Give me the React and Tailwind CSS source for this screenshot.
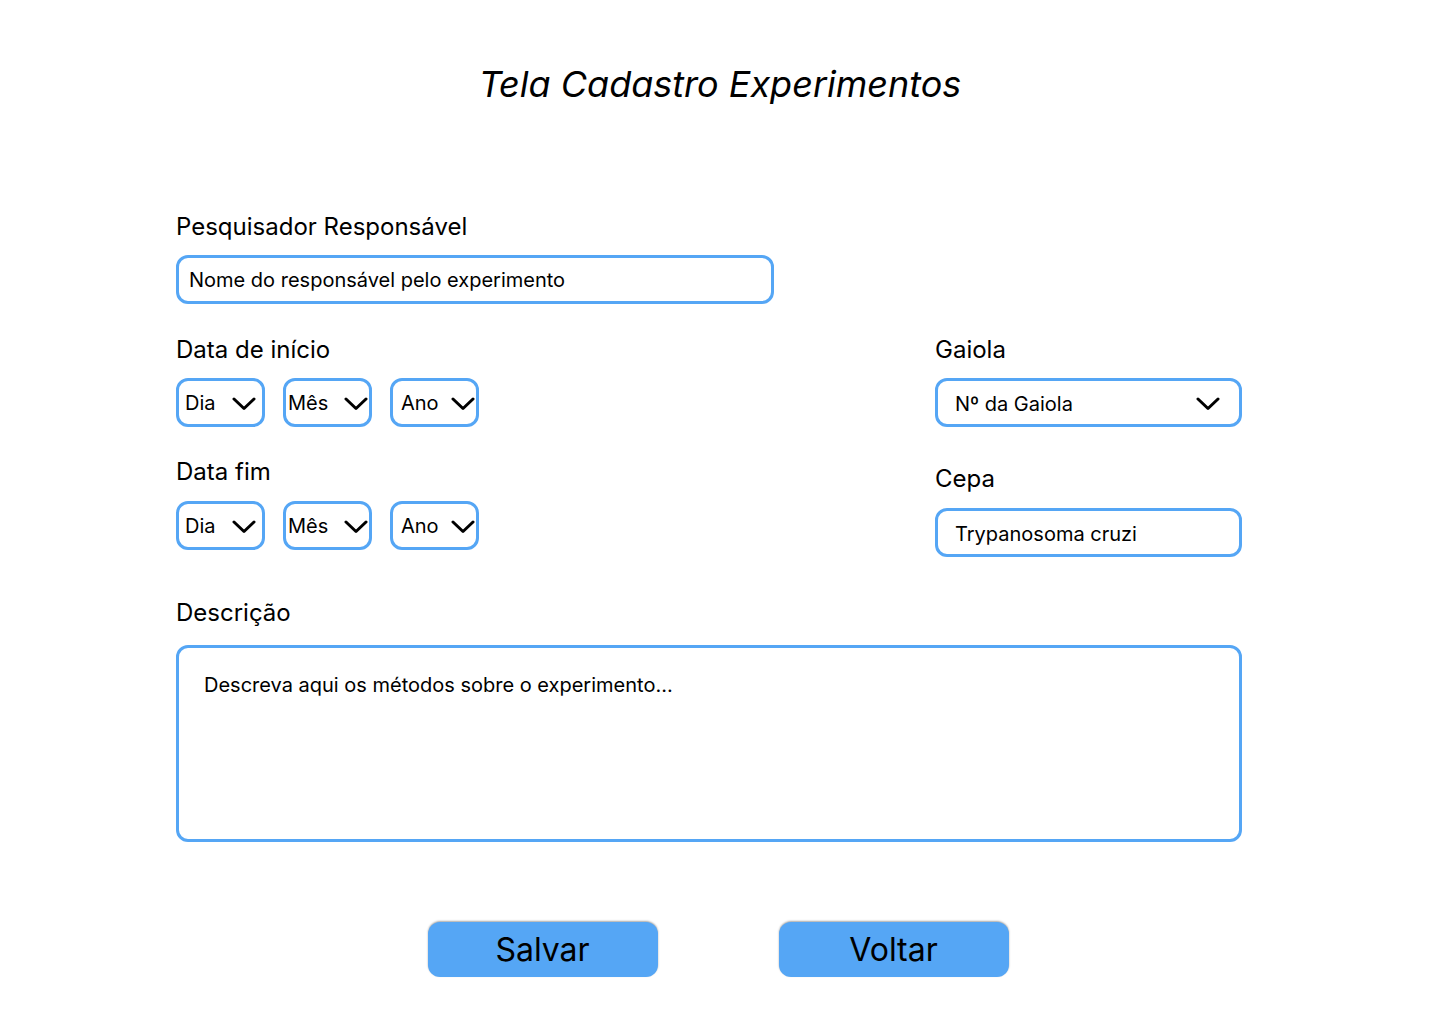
const FONT = { fontFamily: 'Inter, "Noto Sans", sans-serif' };

function Chevron() {
  return (
    <svg width="24" height="14" viewBox="0 0 24 14" fill="none" className="mt-[3px] shrink-0">
      <polyline points="2,2 12,11.5 22,2" stroke="#000" strokeWidth="3" strokeLinecap="round" strokeLinejoin="round" />
    </svg>
  );
}

function Label({ children }) {
  return <div className="text-[24px] leading-[29px] text-black">{children}</div>;
}

function SmallSelect({ text, pl, pr }) {
  return (
    <div className={`flex h-[49px] w-[89px] items-center justify-between rounded-xl border-[3px] border-[#55a6f5] ${pl} ${pr}`}>
      <span className="text-[20px] leading-[24px]">{text}</span>
      <Chevron />
    </div>
  );
}

function DateRow() {
  return (
    <div className="flex gap-[18px]">
      <SmallSelect text="Dia" pl="pl-[6px]" pr="pr-[6px]" />
      <SmallSelect text="Mês" pl="pl-[2px]" pr="pr-[1px]" />
      <SmallSelect text="Ano" pl="pl-[8px]" pr="pr-[1px]" />
    </div>
  );
}

export default function App() {
  return (
    <div className="min-h-screen w-full bg-white text-black" style={FONT}>
      <h1 className="pt-[62px] text-center text-[36px] leading-[44px] italic font-normal">
        Tela Cadastro Experimentos
      </h1>

      <div className="pl-[176px]">
        <div className="mt-[106px]">
          <Label>Pesquisador Responsável</Label>
          <div className="mt-[14px] flex h-[49px] w-[598px] items-center rounded-xl border-[3px] border-[#55a6f5] pl-[10px]">
            <span className="text-[20px] leading-[24px]">Nome do responsável pelo experimento</span>
          </div>
        </div>

        <div className="mt-[31px] flex">
          {/* Datas */}
          <div className="w-[759px]">
            <Label>Data de início</Label>
            <div className="mt-[14px]">
              <DateRow />
            </div>
            <div className="mt-[30px]">
              <Label>Data fim</Label>
            </div>
            <div className="mt-[15px]">
              <DateRow />
            </div>
          </div>

          {/* Gaiola / Cepa */}
          <div className="w-[307px]">
            <Label>Gaiola</Label>
            <div className="mt-[14px] flex h-[49px] items-center justify-between rounded-xl border-[3px] border-[#55a6f5] pl-[17px] pr-[19px]">
              <span className="pt-[3px] text-[20px] leading-[24px]">Nº da Gaiola</span>
              <Chevron />
            </div>
            <div className="mt-[37px]">
              <Label>Cepa</Label>
            </div>
            <div className="mt-[15px] flex h-[49px] items-center rounded-xl border-[3px] border-[#55a6f5] pl-[17px]">
              <span className="pt-[3px] text-[20px] leading-[24px]">Trypanosoma cruzi</span>
            </div>
          </div>
        </div>

        <div className="mt-[41px]">
          <Label>Descrição</Label>
          <div className="mt-[18px] h-[197px] w-[1066px] rounded-xl border-[3px] border-[#55a6f5] pl-[25px] pt-[25px]">
            <span className="text-[20px] leading-[24px]">Descreva aqui os métodos sobre o experimento...</span>
          </div>
        </div>
      </div>

      <div className="mt-[80px] flex justify-center gap-[121px] pr-[4px]">
        <button className="h-[55px] w-[230px] rounded-xl bg-[#55a6f5] text-[32px] leading-[39px] text-black shadow-[0_-1px_2px_rgba(0,0,0,0.35)]">
          Salvar
        </button>
        <button className="h-[55px] w-[230px] rounded-xl bg-[#55a6f5] text-[32px] leading-[39px] text-black shadow-[0_-1px_2px_rgba(0,0,0,0.35)]">
          Voltar
        </button>
      </div>
    </div>
  );
}
